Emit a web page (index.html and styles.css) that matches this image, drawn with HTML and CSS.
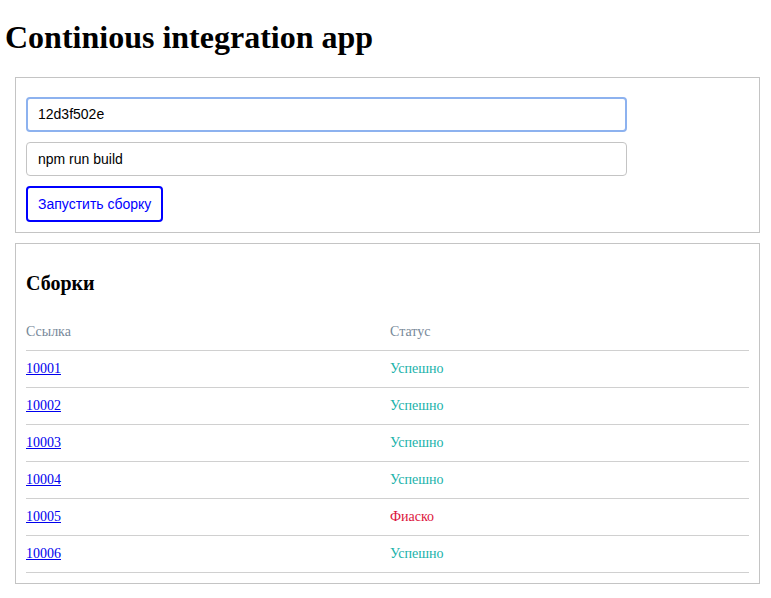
FILE: index.html
```html
<!DOCTYPE html>
<html lang="ru">
<head>
<meta charset="utf-8">
<title>Continious integration app</title>
<link rel="stylesheet" href="styles.css">
</head>
<body>
<h1 class="title">Continious integration app</h1>
<section class="card form-card">
  <div class="field field-focused">12d3f502e</div>
  <div class="field">npm run build</div>
  <div class="button">Запустить сборку</div>
</section>
<section class="card builds-card">
  <h2 class="builds-title">Сборки</h2>
  <table class="builds">
    <thead>
      <tr><th class="col-link">Ссылка</th><th>Статус</th></tr>
    </thead>
    <tbody>
      <tr><td><a href="#">10001</a></td><td class="ok">Успешно</td></tr>
      <tr><td><a href="#">10002</a></td><td class="ok">Успешно</td></tr>
      <tr><td><a href="#">10003</a></td><td class="ok">Успешно</td></tr>
      <tr><td><a href="#">10004</a></td><td class="ok">Успешно</td></tr>
      <tr><td><a href="#">10005</a></td><td class="fail">Фиаско</td></tr>
      <tr><td><a href="#">10006</a></td><td class="ok">Успешно</td></tr>
    </tbody>
  </table>
</section>
</body>
</html>
```
FILE: styles.css
```css
body {
  margin: 0;
  padding: 0 11px 0 15px;
  font-family: "Liberation Serif", "Times New Roman", serif;
  background: #fff;
  color: #000;
}
.title {
  font-size: 32px;
  font-weight: bold;
  margin: 19px 0 21px -10px;
  line-height: 37px;
}
.card {
  border: 1px solid #c4c4c4;
  padding: 10px;
  margin-bottom: 10px;
}
.form-card {
  padding-top: 19px;
  display: flex;
  flex-direction: column;
  align-items: flex-start;
  gap: 10px;
}
.field {
  box-sizing: border-box;
  width: 601px;
  height: 34px;
  border: 1px solid #c4c4c4;
  border-radius: 4px;
  padding: 0 11px;
  font-family: "Liberation Sans", Arial, sans-serif;
  font-size: 14px;
  line-height: 32px;
  color: #000;
}
.field-focused {
  height: 35px;
  border: 2px solid #8db2ef;
  padding: 0 10px;
  line-height: 31px;
}
.button {
  box-sizing: border-box;
  height: 36px;
  border: 2px solid #0000ff;
  border-radius: 4px;
  padding: 0 10px;
  font-family: "Liberation Sans", Arial, sans-serif;
  font-size: 14px;
  line-height: 32px;
  color: #0000ff;
}
.builds-title {
  font-size: 20px;
  font-weight: bold;
  margin: 18px 0 19px;
  line-height: 23px;
}
.builds {
  width: 100%;
  border-collapse: collapse;
  font-size: 14px;
}
.builds th,
.builds td {
  text-align: left;
  font-weight: normal;
  padding: 10px 0;
  line-height: 16px;
  border-bottom: 1px solid #d0d0d0;
}
.builds th {
  color: #778899;
}
.col-link {
  width: 364px;
}
.builds a {
  color: #0000ee;
}
.ok {
  color: #20b2aa;
}
.fail {
  color: #dc143c;
}
```
